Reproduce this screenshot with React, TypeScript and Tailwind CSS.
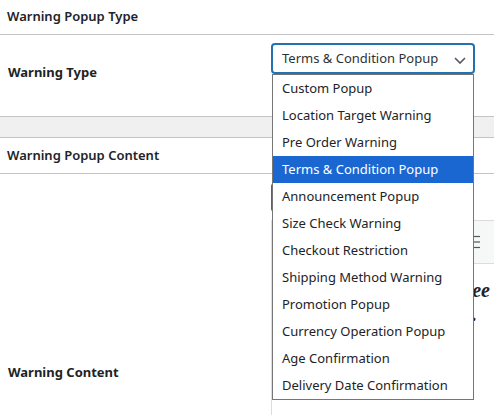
import React from "react";

const options = [
  "Custom Popup",
  "Location Target Warning",
  "Pre Order Warning",
  "Terms & Condition Popup",
  "Announcement Popup",
  "Size Check Warning",
  "Checkout Restriction",
  "Shipping Method Warning",
  "Promotion Popup",
  "Currency Operation Popup",
  "Age Confirmation",
  "Delivery Date Confirmation",
];

const selected = "Terms & Condition Popup";

export default function App() {
  return (
    <div
      className="relative w-[494px] h-[415px] overflow-hidden bg-white text-[#1d2327]"
      style={{ fontFamily: '"Noto Sans", "Open Sans", sans-serif' }}
    >
      {/* Section header */}
      <div className="h-[35px] border-b border-[#c3c4c7] pl-[7px] flex items-center text-[13px] font-semibold">
        Warning Popup Type
      </div>

      {/* Warning type row */}
      <div className="flex h-[81px]">
        <div className="w-[271px] shrink-0 pl-[8px] pt-[27px] text-[13px] font-bold leading-[20px]">
          Warning Type
        </div>
        <div className="flex-1 pt-[8px]">
          <div className="relative w-[204px] h-[31px] border-2 border-[#2271b1] rounded-[4px] flex items-center pl-[9px] text-[13px] text-[#2c3338]">
            Terms &amp; Condition Popup
            <svg
              className="absolute right-[7px] top-[12px]"
              width="12"
              height="7"
              viewBox="0 0 12 7"
              fill="none"
            >
              <polyline points="1,1 6,6 11,1" stroke="#50575e" strokeWidth="1.6" />
            </svg>
          </div>
        </div>
      </div>

      {/* Gray separator band */}
      <div className="h-[22px] bg-[#f0f0f1] border-y border-[#c3c4c7]" />

      {/* Section header 2 */}
      <div className="h-[36px] border-b border-[#c3c4c7] pl-[7px] flex items-center text-[13px] font-semibold">
        Warning Popup Content
      </div>

      {/* Warning content row */}
      <div className="flex">
        <div className="w-[271px] shrink-0 pl-[8px] pt-[188px] text-[13px] font-bold leading-[20px]">
          Warning Content
        </div>
        <div className="flex-1 pt-[9px]">
          <div className="h-[29px] w-[96px] border border-[#2271b1] rounded-[3px] bg-[#f6f7f7]" />
          <div className="mt-[8px] border-l border-[#dcdcde]">
            <div className="h-[44px] bg-[#f6f7f7] border-y border-[#dcdcde] flex items-center justify-end pr-[14px]">
              <svg width="16" height="14" viewBox="0 0 16 14" fill="none">
                <line x1="0" y1="1.5" x2="16" y2="1.5" stroke="#50575e" strokeWidth="1.2" />
                <line x1="0" y1="7" x2="16" y2="7" stroke="#50575e" strokeWidth="1.2" />
                <line x1="0" y1="12.5" x2="16" y2="12.5" stroke="#50575e" strokeWidth="1.2" />
              </svg>
            </div>
            <div
              className="h-[200px] pt-[14px] text-[20px] font-bold italic leading-[24px] text-[#1d2327]"
              style={{ fontFamily: '"Liberation Serif", serif' }}
            >
              <div className="text-right pr-[4px]">I Agree</div>
              <div className="text-right pr-[17px]">.</div>
            </div>
          </div>
        </div>
      </div>

      {/* Open dropdown list */}
      <ul className="absolute left-[272px] top-[74px] w-[202px] bg-white border border-[#767676] text-[13px]">
        {options.map((o) => (
          <li
            key={o}
            className={
              o === selected
                ? "h-[27px] flex items-center pl-[9px] bg-[#1a67d2] text-white"
                : "h-[27px] flex items-center pl-[9px] text-[#1d2327]"
            }
          >
            {o}
          </li>
        ))}
      </ul>
    </div>
  );
}
